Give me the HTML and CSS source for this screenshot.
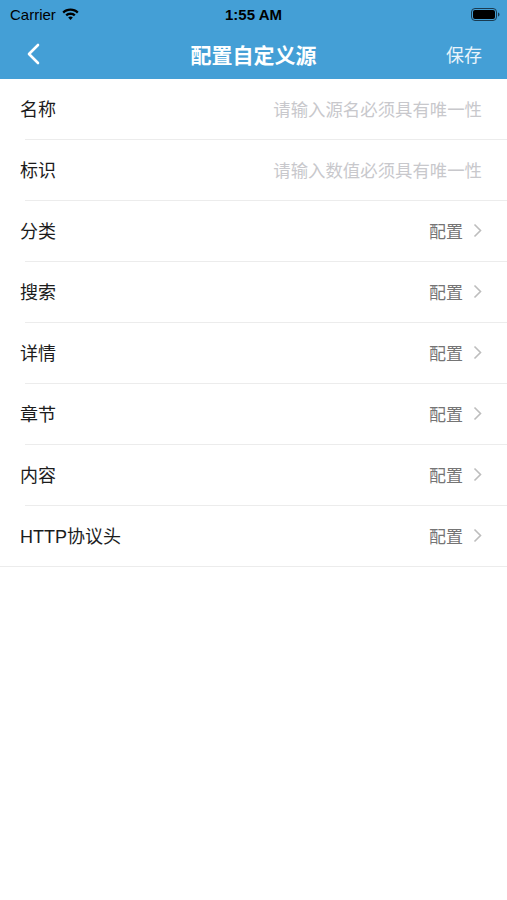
FILE: index.html
```html
<!DOCTYPE html>
<html lang="zh">
<head>
  <meta charset="UTF-8">
  <title>配置自定义源</title>
  <link rel="stylesheet" href="styles.css">
</head>
<body>
  <div class="header">
    <div class="statusbar">
      <span class="carrier">Carrier
        <svg class="wifi" width="17" height="12" viewBox="0 0 17 12">
          <path d="M8.5 0.5C5.3 0.5 2.5 1.7 0.4 3.7l1.6 1.7C3.7 3.8 6 2.8 8.5 2.8s4.8 1 6.5 2.6l1.6-1.7C14.5 1.7 11.7 0.5 8.5 0.5z" fill="#000"/>
          <path d="M8.5 4.6c-2 0-3.8 0.8-5.1 2l1.6 1.7c0.9-0.9 2.1-1.4 3.5-1.4s2.6 0.5 3.5 1.4l1.6-1.7c-1.3-1.2-3.1-2-5.1-2z" fill="#000"/>
          <path d="M8.5 8.6c-0.9 0-1.7 0.3-2.3 0.9L8.5 11.9l2.3-2.4c-0.6-0.6-1.4-0.9-2.3-0.9z" fill="#000"/>
        </svg>
      </span>
      <span class="time">1:55 AM</span>
      <span class="battery">
        <svg width="29" height="13" viewBox="0 0 29 13">
          <rect x="0.5" y="0.5" width="25" height="12" rx="3.5" fill="none" stroke="#1a3a50" stroke-width="1"/>
          <rect x="2" y="2" width="22" height="9" rx="2" fill="#000"/>
          <path d="M27 4.5v4c0.9-0.3 1.5-1.1 1.5-2s-0.6-1.7-1.5-2z" fill="#1a3a50"/>
        </svg>
      </span>
    </div>
    <div class="navbar">
      <span class="back">
        <svg width="14" height="22" viewBox="0 0 14 22">
          <path d="M12 2L3 11l9 9" fill="none" stroke="#fff" stroke-width="2.6" stroke-linecap="round" stroke-linejoin="round"/>
        </svg>
      </span>
      <span class="title">配置自定义源</span>
      <span class="save">保存</span>
    </div>
  </div>

  <div class="list">
    <div class="row">
      <span class="label">名称</span>
      <span class="placeholder">请输入源名必须具有唯一性</span>
    </div>
    <div class="row">
      <span class="label">标识</span>
      <span class="placeholder">请输入数值必须具有唯一性</span>
    </div>
    <div class="row">
      <span class="label">分类</span>
      <span class="value">配置</span>
      <svg class="arrow" width="9" height="15" viewBox="0 0 9 15"><path d="M1.5 1.5l6 6-6 6" fill="none" stroke="#bdbdbd" stroke-width="1.6"/></svg>
    </div>
    <div class="row">
      <span class="label">搜索</span>
      <span class="value">配置</span>
      <svg class="arrow" width="9" height="15" viewBox="0 0 9 15"><path d="M1.5 1.5l6 6-6 6" fill="none" stroke="#bdbdbd" stroke-width="1.6"/></svg>
    </div>
    <div class="row">
      <span class="label">详情</span>
      <span class="value">配置</span>
      <svg class="arrow" width="9" height="15" viewBox="0 0 9 15"><path d="M1.5 1.5l6 6-6 6" fill="none" stroke="#bdbdbd" stroke-width="1.6"/></svg>
    </div>
    <div class="row">
      <span class="label">章节</span>
      <span class="value">配置</span>
      <svg class="arrow" width="9" height="15" viewBox="0 0 9 15"><path d="M1.5 1.5l6 6-6 6" fill="none" stroke="#bdbdbd" stroke-width="1.6"/></svg>
    </div>
    <div class="row">
      <span class="label">内容</span>
      <span class="value">配置</span>
      <svg class="arrow" width="9" height="15" viewBox="0 0 9 15"><path d="M1.5 1.5l6 6-6 6" fill="none" stroke="#bdbdbd" stroke-width="1.6"/></svg>
    </div>
    <div class="row last">
      <span class="label">HTTP协议头</span>
      <span class="value">配置</span>
      <svg class="arrow" width="9" height="15" viewBox="0 0 9 15"><path d="M1.5 1.5l6 6-6 6" fill="none" stroke="#bdbdbd" stroke-width="1.6"/></svg>
    </div>
  </div>
</body>
</html>
```

FILE: styles.css
```css
body {
  margin: 0;
  background: #fff;
  font-family: "Liberation Sans", Arial, "Noto Sans CJK SC", sans-serif;
}
.header {
  background: #449fd6;
  height: 79px;
}
.statusbar {
  height: 28px;
  display: flex;
  align-items: center;
  justify-content: space-between;
  padding: 0 7px 0 10px;
  font-size: 15px;
  color: #000;
  position: relative;
}
.carrier {
  display: flex;
  align-items: center;
  gap: 6px;
}
.time {
  position: absolute;
  left: 0;
  right: 0;
  text-align: center;
  font-weight: bold;
}
.battery {
  display: flex;
  align-items: center;
}
.navbar {
  height: 51px;
  display: flex;
  align-items: center;
  justify-content: space-between;
  padding: 0 25px 0 26px;
  position: relative;
  color: #fff;
}
.back {
  display: flex;
  align-items: center;
}
.title {
  position: absolute;
  left: 0;
  right: 0;
  text-align: center;
  font-size: 21px;
  font-weight: bold;
}
.save {
  font-size: 18px;
  color: #eaf4fb;
}
.row {
  height: 61px;
  box-sizing: border-box;
  display: flex;
  align-items: center;
  padding: 0 25px 3px 20px;
  position: relative;
}
.row::after {
  content: "";
  position: absolute;
  left: 25px;
  right: 0;
  bottom: 0;
  height: 1px;
  background: #ececec;
}
.row.last::after {
  left: 0;
}
.label {
  flex: 1;
  font-size: 18px;
  color: #1c1c1c;
}
.placeholder {
  font-size: 17.4px;
  color: #c8c8cc;
}
.value {
  font-size: 17px;
  color: #757575;
}
.arrow {
  margin-left: 10px;
}
```
